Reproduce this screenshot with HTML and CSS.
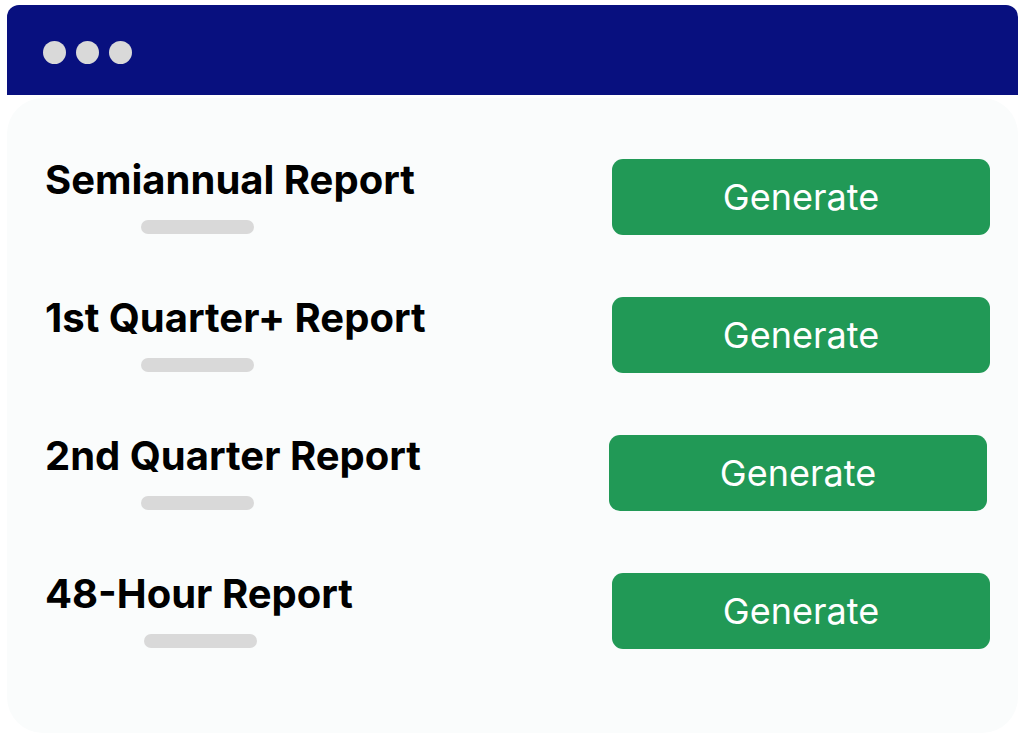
FILE: index.html
```html
<!DOCTYPE html>
<html lang="en">
<head>
  <meta charset="UTF-8">
  <meta name="viewport" content="width=device-width, initial-scale=1.0">
  <title>Reports</title>
  <link rel="stylesheet" href="styles.css">
</head>
<body>
  <div class="window">
    <div class="title-bar">
      <span class="dot"></span>
      <span class="dot"></span>
      <span class="dot"></span>
    </div>

    <div class="panel">
      <div class="report-row">
        <div class="report-info">
          <h2>Semiannual Report</h2>
          <div class="placeholder"></div>
        </div>
        <button class="generate-btn">Generate</button>
      </div>

      <div class="report-row">
        <div class="report-info">
          <h2>1st Quarter+ Report</h2>
          <div class="placeholder"></div>
        </div>
        <button class="generate-btn">Generate</button>
      </div>

      <div class="report-row">
        <div class="report-info">
          <h2>2nd Quarter Report</h2>
          <div class="placeholder"></div>
        </div>
        <button class="generate-btn">Generate</button>
      </div>

      <div class="report-row">
        <div class="report-info">
          <h2>48-Hour Report</h2>
          <div class="placeholder"></div>
        </div>
        <button class="generate-btn">Generate</button>
      </div>
    </div>
  </div>
</body>
</html>
```

FILE: styles.css
```css
body {
  margin: 0;
  background: #ffffff;
  font-family: 'Inter', 'Liberation Sans', sans-serif;
}

.window {
  padding: 5px 6px 0 7px;
}

.title-bar {
  height: 90px;
  background-color: #08107f;
  border-radius: 12px 12px 0 0;
  display: flex;
  align-items: center;
  gap: 10px;
  padding: 4px 0 0 36px;
  box-sizing: border-box;
}

.dot {
  width: 23px;
  height: 23px;
  border-radius: 50%;
  background-color: #d9d9d9;
}

.panel {
  margin-top: 3px;
  height: 635px;
  box-sizing: border-box;
  background-color: #fafcfc;
  border-radius: 36px;
  padding: 58px 28px 0 38px;
  display: flex;
  flex-direction: column;
  gap: 60px;
}

.report-row {
  display: flex;
  justify-content: space-between;
  align-items: flex-end;
}

.report-info h2 {
  margin: 0;
  font-size: 40px;
  line-height: 48px;
  font-weight: 700;
  color: #000;
}

.placeholder {
  width: 113px;
  height: 14px;
  margin: 16px 0 0 96px;
  border-radius: 7px;
  background-color: #d9d9d9;
}

.generate-btn {
  width: 378px;
  height: 76px;
  margin-bottom: -1px;
  border: none;
  border-radius: 11px;
  background-color: #219956;
  color: white;
  font-family: inherit;
  font-size: 36px;
  font-weight: 400;
  cursor: pointer;
}

.generate-btn:hover {
  background-color: #1c8549;
}

.report-row:nth-child(3) .generate-btn {
  margin-right: 3px;
}

.report-row:nth-child(4) .placeholder {
  margin-left: 99px;
}
```
